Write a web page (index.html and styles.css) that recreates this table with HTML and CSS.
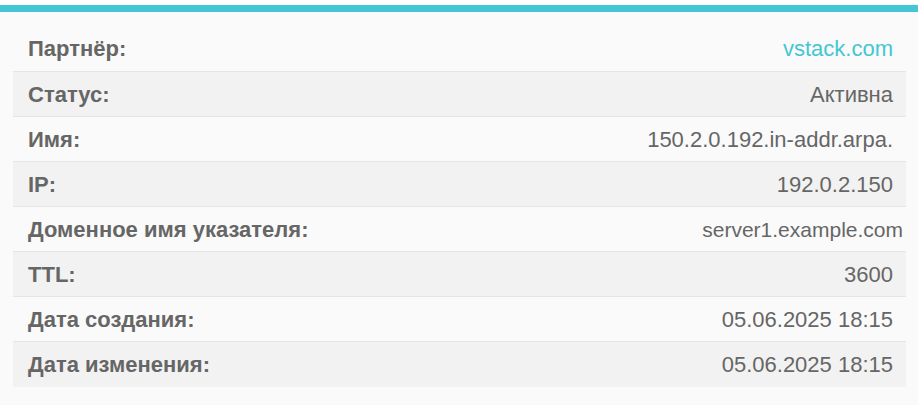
FILE: index.html
```html
<!DOCTYPE html>
<html lang="ru">
<head>
<meta charset="utf-8">
<link rel="stylesheet" href="styles.css">
</head>
<body>
<div class="top"><div class="bar"></div></div>
<div class="content">
  <div class="table">
    <div class="row"><div class="label">Партнёр:</div><div class="value"><a class="link" href="#">vstack.com</a></div></div>
    <div class="row alt"><div class="label">Статус:</div><div class="value">Активна</div></div>
    <div class="row"><div class="label">Имя:</div><div class="value">150.2.0.192.in-addr.arpa.</div></div>
    <div class="row alt"><div class="label">IP:</div><div class="value">192.0.2.150</div></div>
    <div class="row"><div class="label">Доменное имя указателя:</div><div class="value wide">server1.example.com</div></div>
    <div class="row alt"><div class="label">TTL:</div><div class="value">3600</div></div>
    <div class="row"><div class="label">Дата создания:</div><div class="value">05.06.2025 18:15</div></div>
    <div class="row alt"><div class="label">Дата изменения:</div><div class="value">05.06.2025 18:15</div></div>
  </div>
</div>
</body>
</html>
```
FILE: styles.css
```css
html, body {
  margin: 0;
  padding: 0;
  background: #fafafa;
  font-family: "Liberation Sans", Arial, sans-serif;
  color: #666;
}
.top {
  background: #fff;
  padding-top: 5px;
}
.bar {
  height: 7px;
  background: #45c6d4;
}
.content {
  padding: 14px 12px 17px 13px;
}
.table {
  display: flex;
  flex-direction: column;
}
.row {
  display: flex;
  justify-content: space-between;
  align-items: center;
  height: 45px;
  box-sizing: border-box;
  padding: 1px 13px 0 15px;
  font-size: 22px;
  border-top: 1px solid #e5e5e5;
}
.row:first-child {
  border-top: 0;
}
.row:last-child {
  height: 46px;
}
.row.alt {
  background: #f2f2f2;
}
.label {
  font-weight: bold;
  color: #666;
}
.value {
  color: #666;
}
.value.wide {
  font-size: 21px;
  margin-right: -10px;
}
.link {
  color: #45c6d4;
  text-decoration: none;
}
```
